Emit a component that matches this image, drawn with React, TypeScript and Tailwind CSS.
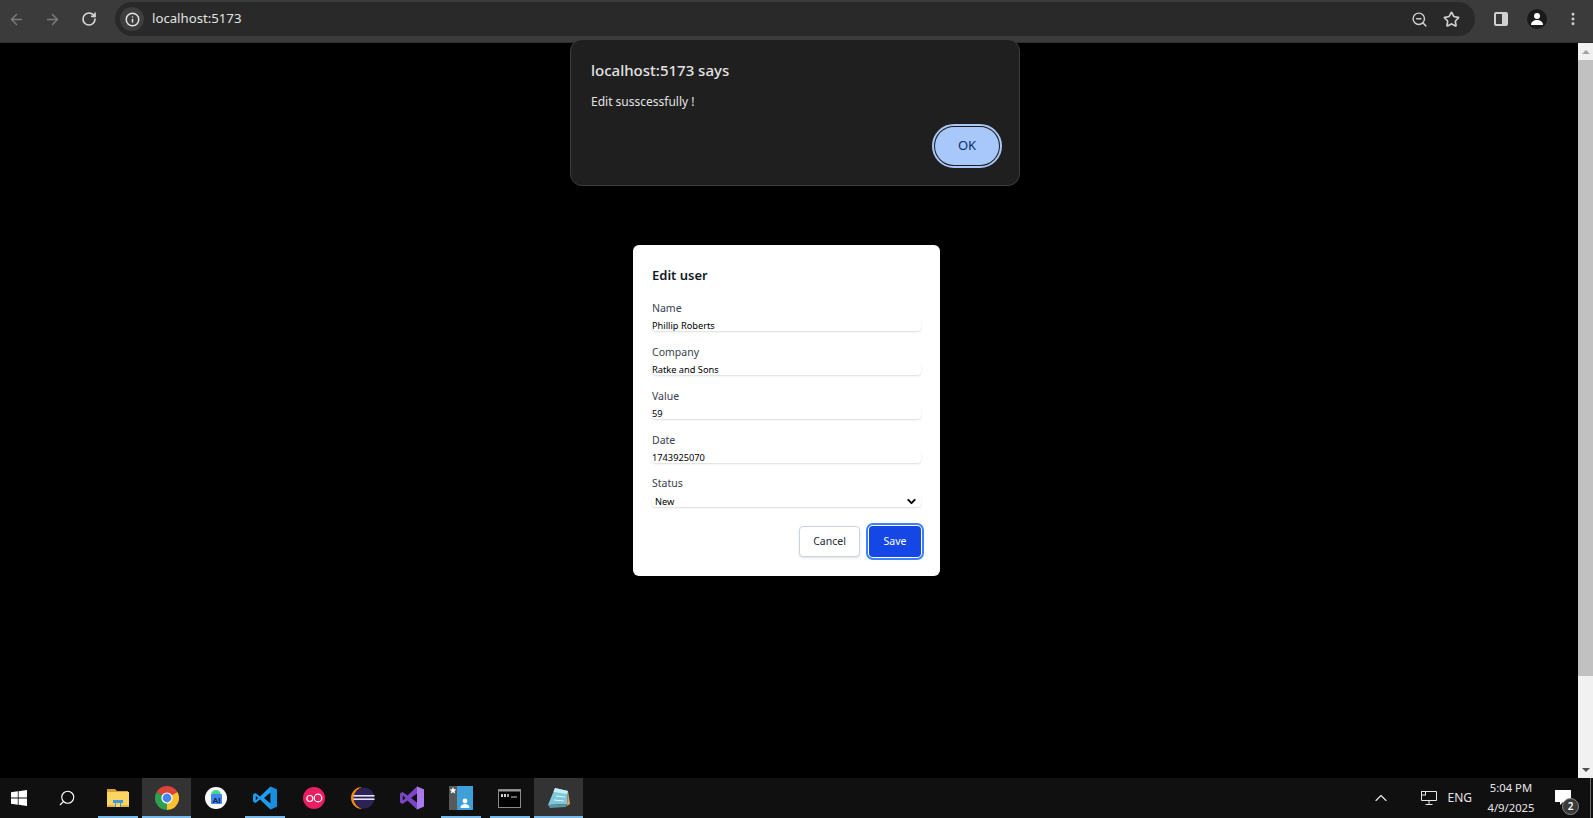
import React from 'react';
import { ArrowLeft, ArrowRight, RotateCw, ZoomOut, Star, MoreVertical, ChevronDown, ChevronUp, Search, Info } from 'lucide-react';

const FIELDS = [
  { label: 'Name', value: 'Phillip Roberts' },
  { label: 'Company', value: 'Ratke and Sons' },
  { label: 'Value', value: '59' },
  { label: 'Date', value: '1743925070' },
];

const ChromeLogo = () => (
  <svg width="24" height="24" viewBox="0 0 24 24">
    <path d="M12 12 L1.6 6 A12 12 0 0 1 22.4 6 Z" fill="#db4437" />
    <path d="M12 12 L22.4 6 A12 12 0 0 1 12 24 Z" fill="#fbc02d" />
    <path d="M12 12 L12 24 A12 12 0 0 1 1.6 6 Z" fill="#2e9e4f" />
    <circle cx="12" cy="12" r="5.6" fill="#fff" />
    <circle cx="12" cy="12" r="4.4" fill="#4285f4" />
  </svg>
);

const ExplorerIcon = () => (
  <svg width="22" height="20" viewBox="0 0 22 20">
    <path d="M0 1h8l2 2h11v3H0z" fill="#d9a22a" />
    <rect x="0" y="4" width="22" height="15" fill="#fcd462" />
    <rect x="0" y="17" width="22" height="2" fill="#e8b83e" />
    <path d="M6 15v-3h10v3h-2v4h-6v-4z" fill="#3f9bde" />
    <rect x="9" y="15" width="4" height="4" fill="#fcd462" />
  </svg>
);

const AiStudioIcon = () => (
  <svg width="22" height="22" viewBox="0 0 22 22">
    <circle cx="11" cy="11" r="11" fill="#fff" />
    <path d="M6 8a5 5 0 0 1 10 0z" fill="#3ddc84" />
    <rect x="6" y="7" width="11" height="10" rx="1" fill="#4285f4" />
    <text x="7.5" y="15.5" fontSize="8" fontWeight="700" fill="#10243f" fontFamily="Liberation Sans, sans-serif">AI</text>
  </svg>
);

const VsCodeIcon = () => (
  <svg width="24" height="24" viewBox="0 0 24 24">
    <path d="M17.5 0.5 L24 3.5 V20.5 L17.5 23.5 L7 13.5 L2.5 17 L0 15.5 V8.5 L2.5 7 L7 10.5 Z M17.5 6.5 L11 12 L17.5 17.5 Z M2.8 9.800 V14.200 L5 12 Z" fill="#1f9cf0" fillRule="evenodd" />
    <path d="M17.5 0.5 L24 3.5 V20.5 L17.5 23.5 Z" fill="#0a7cc8" opacity="0.4" />
  </svg>
);

const OoIcon = () => (
  <svg width="22" height="22" viewBox="0 0 22 22">
    <circle cx="11" cy="11" r="11" fill="#e91e63" />
    <circle cx="6.800" cy="11.500" r="3" fill="none" stroke="#fff" strokeWidth="1.200" />
    <circle cx="15" cy="11" r="3.800" fill="none" stroke="#fff" strokeWidth="1.200" />
  </svg>
);

const EclipseIcon = () => (
  <svg width="24" height="24" viewBox="0 0 24 24">
    <path d="M11 1 A11 11 0 0 0 11 23 A12 12 0 0 1 11 1 Z" fill="#f08c00" />
    <circle cx="13" cy="12" r="10.500" fill="#2c2255" />
    <rect x="2.500" y="9" width="21" height="1.600" fill="#e8e4f5" />
    <rect x="2.500" y="12.400" width="21" height="1.600" fill="#e8e4f5" />
  </svg>
);

const VisualStudioIcon = () => (
  <svg width="24" height="24" viewBox="0 0 24 24">
    <path d="M17 0.500 L24 3.500 V20.500 L17 23.500 L7.500 14.500 L2.500 18 L0 16.500 V7.500 L2.500 6 L7.500 9.500 Z M17 7.500 L11 12 L17 16.500 Z M2.800 9.500 V14.500 L5.500 12 Z" fill="#7b46c4" fillRule="evenodd" />
    <path d="M17 0.500 L24 3.500 V20.500 L17 23.500 V16.500 L17 7.500 Z" fill="#a97bea" />
  </svg>
);

const UserTileIcon = () => (
  <svg width="24" height="24" viewBox="0 0 24 24">
    <rect x="0" y="0" width="8" height="24" fill="#595959" />
    <rect x="8" y="0" width="16" height="24" fill="#3f9fd8" />
    <path d="M4 1l1 2.200 2.400.2-1.800 1.600.6 2.400L4 6.200 1.800 7.400l.6-2.400L.6 3.400 3 3.200z" fill="#fff" />
    <circle cx="16" cy="15" r="2.400" fill="#fff" />
    <path d="M11.500 22c0-3 2-4 4.500-4s4.500 1 4.500 4z" fill="#fff" />
  </svg>
);

const TerminalIcon = () => (
  <svg width="23" height="19" viewBox="0 0 23 19">
    <rect x="0.500" y="0.500" width="22" height="18" fill="#000" stroke="#8a8a8a" />
    <rect x="1" y="1" width="21" height="1.500" fill="#9a9a9a" />
    <rect x="3" y="5" width="2" height="3" fill="#d0d0d0" />
    <rect x="6" y="5" width="2" height="3" fill="#d0d0d0" />
    <rect x="9" y="5" width="2" height="3" fill="#a0a0a0" />
    <rect x="13" y="7.500" width="6" height="1" fill="#d0d0d0" />
  </svg>
);

const NotepadIcon = () => (
  <svg width="24" height="24" viewBox="0 0 24 24">
    <path d="M8 2 L21 5 L20 18 L1 19 Z" fill="#7cc7dc" />
    <path d="M8 2 L21 5 L20 8 L6.500 6 Z" fill="#c7eef5" />
    <path d="M1 19 L20 18 L19 21 L3 22 Z" fill="#5d93a3" />
    <path d="M21 5 L23 18 L20 20 Z" fill="#d9a760" />
    <path d="M9 10 L18 11 M7 14 L17 15" stroke="#e4f7fb" strokeWidth="1" />
  </svg>
);

const TaskItem = ({ children, active, open }: { children: React.ReactNode; active?: boolean; open?: boolean }) => (
  <div className={`relative flex h-10 w-[49px] items-center justify-center ${active ? 'bg-[#333333]' : ''}`}>
    {children}
    {open && <div className={`absolute bottom-0 h-[2px] bg-[#76b9ed] ${active ? 'inset-x-0' : 'left-[5px] right-[4px]'}`} />}
  </div>
);

export default function App() {
  return (
    <div className="relative flex h-[818px] w-[1593px] flex-col overflow-hidden bg-black font-['Noto_Sans',sans-serif]">
      <header className="flex h-[43px] shrink-0 items-start border-b border-[#2f2f2f] bg-[#3b3b3b] pt-[2px]">
        <div className="flex h-[34px] w-[115px] items-center pl-[8px] text-[#7b7b7b]">
          <ArrowLeft size={17} strokeWidth={2} />
          <ArrowRight size={17} strokeWidth={2} className="ml-[19px]" />
          <RotateCw size={16} strokeWidth={2.4} className="ml-[20px] text-[#dadada]" />
        </div>
        <div className="flex h-[34px] w-[1360px] items-center rounded-full bg-[#292929] pl-[5px] pr-[15px]">
          <div className="flex h-[24px] w-[24px] items-center justify-center rounded-full bg-[#3e3e3e] text-[#e3e3e3]">
            <Info size={15} strokeWidth={2.4} />
          </div>
          <span className="ml-[8px] flex-1 text-[13.2px] text-[#e3e3e3]">localhost:5173</span>
          <ZoomOut size={17} strokeWidth={2} className="text-[#d0d0d0]" />
          <Star size={17} strokeWidth={2.4} className="ml-[15px] text-[#d0d0d0]" />
        </div>
        <div className="flex h-[34px] flex-1 items-center pl-[19px]">
          <div className="flex h-[14px] w-[14px] overflow-hidden rounded-[2px] border-2 border-[#d0d0d0]">
            <div className="w-[6px]" />
            <div className="flex-1 bg-[#d0d0d0]" />
          </div>
          <div className="ml-[19px] flex h-[20px] w-[20px] items-center justify-center rounded-full bg-[#1a1a1a]">
            <svg width="14" height="14" viewBox="0 0 14 14">
              <circle cx="7" cy="4" r="3" fill="#fff" />
              <path d="M1 13c0-3.500 3-5 6-5s6 1.500 6 5z" fill="#fff" />
            </svg>
          </div>
          <MoreVertical size={16} strokeWidth={2.4} className="ml-[18px] text-[#d0d0d0]" />
        </div>
      </header>

      <div className="flex min-h-0 flex-1">
        <main className="flex-1 bg-black pl-[633px] pt-[202px]">
          <div className="flex h-[331px] w-[307px] flex-col rounded-[6px] bg-white px-[19px] pt-[20px]">
            <h2 className="h-[21px] text-[13px] font-semibold leading-[21px] text-[#111827]">Edit user</h2>
            <div className="mt-[14px] flex flex-col gap-[13px]">
              {FIELDS.map(f => (
                <label key={f.label} className="flex flex-col gap-[3px]">
                  <span className="h-[16px] text-[10.5px] leading-[16px] text-[#374151]">{f.label}</span>
                  <input
                    readOnly
                    value={f.value}
                    className="h-[12px] w-[269px] rounded-[4px] bg-white pt-[2px] text-[9.25px] text-black shadow-[0_1px_2px_rgba(0,0,0,0.14)] outline-none"
                  />
                </label>
              ))}
            </div>
            <div className="mt-[12px] flex flex-col gap-[4px]">
              <span className="h-[16px] text-[10.5px] leading-[16px] text-[#374151]">Status</span>
              <div className="flex h-[12px] w-[269px] items-center justify-between rounded-[4px] bg-white pl-[3px] pr-[3px] pt-[1px] text-[9.25px] text-black shadow-[0_1px_2px_rgba(0,0,0,0.14)]">
                <span>New</span>
                <ChevronDown size={13} strokeWidth={3.5} />
              </div>
            </div>
            <div className="mt-[19px] flex justify-end gap-[9px]">
              <button className="h-[31px] w-[61px] rounded-[4px] border border-[#cbd5e1] bg-white text-[10.5px] text-[#1f2937] shadow-sm">Cancel</button>
              <button className="h-[31px] w-[52px] rounded-[4px] bg-[#1447e6] text-[10.5px] text-white outline-2 outline-offset-1 outline-[#3b82f6]">Save</button>
            </div>
          </div>
        </main>

        <aside className="flex w-[15px] shrink-0 flex-col items-center bg-[#f1f1f1]">
          <div className="flex h-[17px] items-center justify-center">
            <div className="h-0 w-0 border-x-[4px] border-b-[4px] border-x-transparent border-b-[#a3a3a3]" />
          </div>
          <div className="h-[616px] w-full bg-[#c1c1c1]" />
          <div className="mt-auto flex h-[17px] items-center justify-center">
            <div className="h-0 w-0 border-x-[4px] border-t-[4px] border-x-transparent border-t-[#505050]" />
          </div>
        </aside>
      </div>

      <footer className="flex h-10 shrink-0 items-center bg-[#101010] text-[#e6e6e6]">
        <div className="flex h-10 w-[46px] items-center justify-center pr-[8px]">
          <svg width="16" height="16" viewBox="0 0 16 16" fill="#fff">
            <path d="M0 2.300 6.800 1.300V7.600H0zM7.600 1.200 16 0V7.600H7.600zM0 8.400H6.800V14.700L0 13.700zM7.600 8.400H16V16L7.600 14.800z" />
          </svg>
        </div>
        <div className="flex h-10 w-[47px] items-center justify-center pr-[5px]">
          <Search size={18} strokeWidth={1.5} className="-scale-x-100 text-white" />
        </div>
        <TaskItem open><ExplorerIcon /></TaskItem>
        <TaskItem active open><ChromeLogo /></TaskItem>
        <TaskItem><AiStudioIcon /></TaskItem>
        <TaskItem open><VsCodeIcon /></TaskItem>
        <TaskItem><OoIcon /></TaskItem>
        <TaskItem><EclipseIcon /></TaskItem>
        <TaskItem><VisualStudioIcon /></TaskItem>
        <TaskItem open><UserTileIcon /></TaskItem>
        <TaskItem open><TerminalIcon /></TaskItem>
        <TaskItem active open><NotepadIcon /></TaskItem>

        <div className="ml-auto flex h-10 items-center">
          <ChevronUp size={20} strokeWidth={1.4} className="text-[#e6e6e6]" />
          <svg width="16" height="14" viewBox="0 0 16 14" fill="none" stroke="#e6e6e6" className="ml-[30px]">
            <path d="M3.500 0.500H15.500V9.500H0.500V4M8 9.500V13M4.500 13.500H11.500" />
            <rect x="0.500" y="0.500" width="4" height="3.500" />
          </svg>
          <span className="ml-[10px] text-[12px]">ENG</span>
          <div className="ml-[14px] flex w-[50px] flex-col items-center text-[11.25px] leading-[20px]">
            <span>5:04 PM</span>
            <span>4/9/2025</span>
          </div>
          <div className="relative ml-[19px] mr-[2px] h-10 w-[36px] border-r border-[#6b6b6b]">
            <svg width="16" height="16" viewBox="0 0 16 16" fill="#fff" className="absolute left-0 top-[12px]">
              <path d="M0 0H16V12H8L5 15V12H0z" />
            </svg>
            <div className="absolute left-[7px] top-[20px] flex h-[17px] w-[17px] items-center justify-center rounded-full border border-[#8a8a8a] bg-[#3a3a3a] text-[10px] font-semibold text-white">2</div>
          </div>
        </div>
      </footer>

      <div className="absolute left-[570px] top-[39px] flex h-[147px] w-[450px] flex-col rounded-[12px] border border-[#3c3c3c] bg-[#1f1f1f] px-[20px] pt-[20px]">
        <h1 className="text-[15px] font-medium leading-[21px] text-[#e3e3e3]">localhost:5173 says</h1>
        <p className="mt-[12px] text-[12px] leading-[18px] text-[#e3e3e3]">Edit susscessfully !</p>
        <div className="mt-[16px] flex justify-end">
          <button className="h-[38px] w-[64px] rounded-full bg-[#a8c7fa] text-[13px] text-[#062e6f] outline-2 outline-offset-[1px] outline-[#a8c7fa]">OK</button>
        </div>
      </div>
    </div>
  );
}
